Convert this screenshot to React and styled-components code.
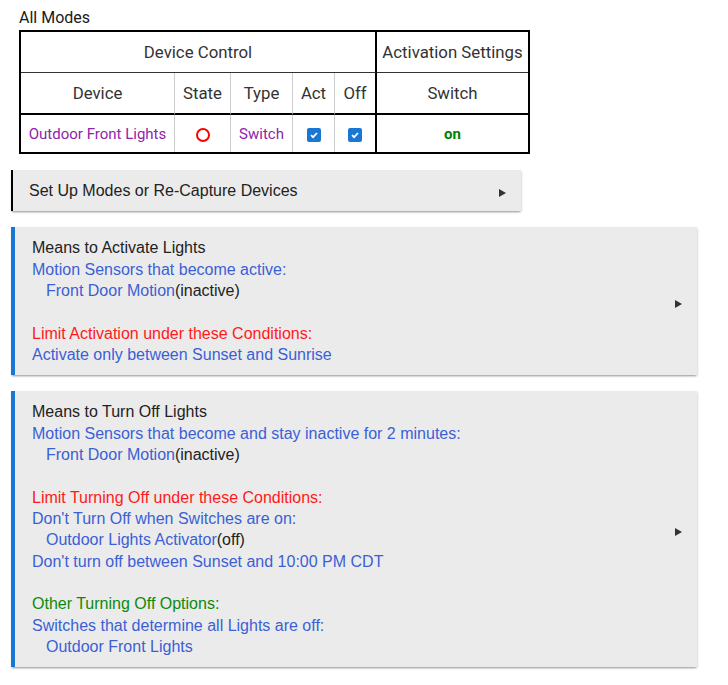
import React from "react";
import styled, { createGlobalStyle } from "styled-components";

const Global = createGlobalStyle`
  html, body { margin: 0; padding: 0; background: #fff; }
  * { box-sizing: border-box; }
`;

const Page = styled.div`
  padding: 9px 31px 16px 11px;
  width: 728px;
`;

const Title = styled.div`
  font-family: Roboto, "Liberation Sans", sans-serif;
  font-weight: 400;
  font-size: 16px;
  line-height: 18px;
  color: #1a1a1a;
  margin-left: 8px;
`;

const Table = styled.table`
  margin: 3px 0 16px 8px;
  border: 2px solid #000;
  border-spacing: 0;
  border-collapse: separate;
  table-layout: fixed;
  font-family: Roboto, "Liberation Sans", sans-serif;
  font-size: 16.8px;
  color: #333;
`;

const Cell = styled.td`
  padding: 0;
  text-align: center;
  vertical-align: middle;
  height: ${(p) => p.$h}px;
  width: ${(p) => (p.$w ? `${p.$w}px` : "auto")};
  border-right: ${(p) =>
    p.$right === "thick" ? "2px solid #000" : p.$right === "thin" ? "1px solid #ccc" : "none"};
  border-bottom: ${(p) =>
    p.$bottom === "thick" ? "2px solid #000" : p.$bottom === "thin" ? "1px solid #333" : "none"};
  color: ${(p) => p.$color || "#333"};
  font-weight: ${(p) => (p.$bold ? 700 : 400)};
  font-size: ${(p) => (p.$data ? "15px" : "inherit")};
  white-space: nowrap;
`;

const Circle = styled.span`
  display: inline-block;
  width: 14px;
  height: 14px;
  border: 2px solid #f00;
  border-radius: 50%;
  vertical-align: middle;
`;

const Check = styled.span`
  display: inline-flex;
  align-items: center;
  justify-content: center;
  width: 14px;
  height: 14px;
  border-radius: 2px;
  background: #1976d2;
  vertical-align: middle;
`;

const Box = styled.div`
  display: flex;
  align-items: center;
  width: ${(p) => p.$w}px;
  margin-bottom: 16px;
  background: #ebebeb;
  border-left: ${(p) => p.$bw}px solid ${(p) => p.$accent};
  box-shadow: 0 2px 2px -1px rgba(0, 0, 0, 0.35), 1px 1px 2px rgba(0, 0, 0, 0.12);
  padding: 10px 15px 10px ${(p) => p.$pl}px;
  font-family: "Liberation Sans", Arial, sans-serif;
  font-size: 16px;
  line-height: 21.33px;
  color: #222;
`;

const Content = styled.div`
  flex: 1;
`;

const Line = styled.div`
  color: ${(p) => p.$color || "#222"};
  padding-left: ${(p) => (p.$indent ? 14 : 0)}px;
  white-space: nowrap;
`;

const Plain = styled.span`
  color: #222;
`;

const Arrow = styled.span`
  width: 0;
  height: 0;
  margin-top: 5px;
  border-top: 4px solid transparent;
  border-bottom: 4px solid transparent;
  border-left: 7px solid #333;
  flex: none;
`;

const BLUE = "#3b5fd6";
const RED = "#ff1a1a";
const GREEN = "#0b8a0b";
const PURPLE = "#8e24aa";

const Tick = () => (
  <Check>
    <svg width="10" height="10" viewBox="0 0 10 10">
      <path d="M2 5.2 L4.1 7.2 L8 3" fill="none" stroke="#fff" strokeWidth="1.8" />
    </svg>
  </Check>
);

export default function App() {
  return (
    <>
      <Global />
      <Page>
        <Title>All Modes</Title>
        <Table>
          <tbody>
            <tr>
              <Cell colSpan={5} $h={41} $right="thick" $bottom="thin">
                Device Control
              </Cell>
              <Cell $h={41} $bottom="thin">Activation Settings</Cell>
            </tr>
            <tr>
              <Cell $h={42} $w={154} $right="thin" $bottom="thick">Device</Cell>
              <Cell $h={42} $w={56} $right="thin" $bottom="thick">State</Cell>
              <Cell $h={42} $w={62} $right="thin" $bottom="thick">Type</Cell>
              <Cell $h={42} $w={42} $right="thin" $bottom="thick">Act</Cell>
              <Cell $h={42} $w={42} $right="thick" $bottom="thick">Off</Cell>
              <Cell $h={42} $w={151} $bottom="thick">Switch</Cell>
            </tr>
            <tr>
              <Cell $h={37} $right="thin" $color={PURPLE} $data>
                Outdoor Front Lights
              </Cell>
              <Cell $h={37} $right="thin"><Circle /></Cell>
              <Cell $h={37} $right="thin" $color={PURPLE} $data>Switch</Cell>
              <Cell $h={37} $right="thin"><Tick /></Cell>
              <Cell $h={37} $right="thick"><Tick /></Cell>
              <Cell $h={37} $color="#008000" $bold $data>on</Cell>
            </tr>
          </tbody>
        </Table>

        <Box $w={510} $bw={2} $accent="#000" $pl={16}>
          <Content>
            <Line>Set Up Modes or Re-Capture Devices</Line>
          </Content>
          <Arrow />
        </Box>

        <Box $w={686} $bw={4} $accent="#1976d2" $pl={17}>
          <Content>
            <Line>Means to Activate Lights</Line>
            <Line $color={BLUE}>Motion Sensors that become active:</Line>
            <Line $color={BLUE} $indent>
              Front Door Motion<Plain>(inactive)</Plain>
            </Line>
            <Line>&nbsp;</Line>
            <Line $color={RED}>Limit Activation under these Conditions:</Line>
            <Line $color={BLUE}>Activate only between Sunset and Sunrise</Line>
          </Content>
          <Arrow />
        </Box>

        <Box $w={686} $bw={4} $accent="#1976d2" $pl={17}>
          <Content>
            <Line>Means to Turn Off Lights</Line>
            <Line $color={BLUE}>Motion Sensors that become and stay inactive for 2 minutes:</Line>
            <Line $color={BLUE} $indent>
              Front Door Motion<Plain>(inactive)</Plain>
            </Line>
            <Line>&nbsp;</Line>
            <Line $color={RED}>Limit Turning Off under these Conditions:</Line>
            <Line $color={BLUE}>Don't Turn Off when Switches are on:</Line>
            <Line $color={BLUE} $indent>
              Outdoor Lights Activator<Plain>(off)</Plain>
            </Line>
            <Line $color={BLUE}>Don't turn off between Sunset and 10:00 PM CDT</Line>
            <Line>&nbsp;</Line>
            <Line $color={GREEN}>Other Turning Off Options:</Line>
            <Line $color={BLUE}>Switches that determine all Lights are off:</Line>
            <Line $color={BLUE} $indent>Outdoor Front Lights</Line>
          </Content>
          <Arrow />
        </Box>
      </Page>
    </>
  );
}
